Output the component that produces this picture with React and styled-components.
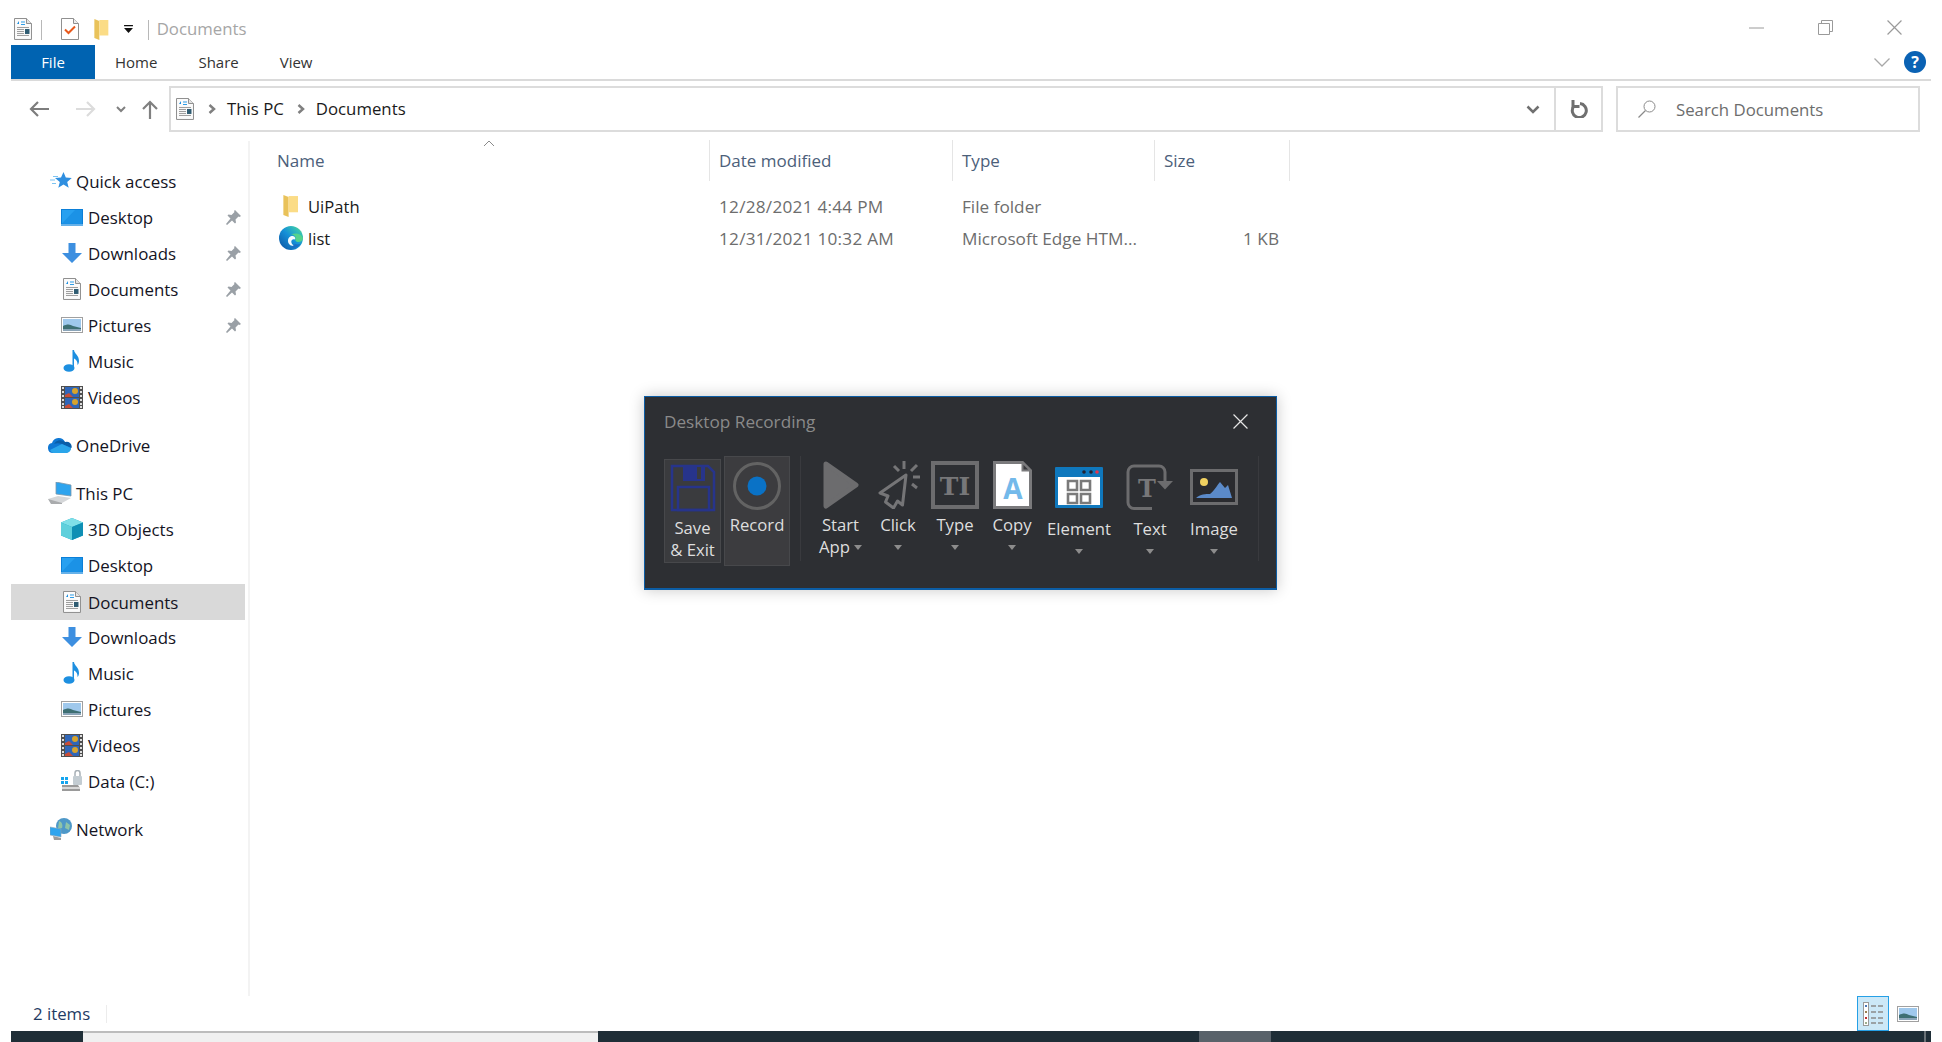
import React from 'react'
import styled, { createGlobalStyle } from 'styled-components'

const GlobalStyle = createGlobalStyle`
  html, body {
    margin: 0;
    padding: 0;
    background: #ffffff;
    font-family: 'Open Sans', 'Noto Sans', sans-serif;
    overflow: hidden;
  }
`

const Page = styled.div`
  position: relative;
  width: 1942px;
  height: 1042px;
  padding: 0 11px;
  box-sizing: border-box;
  display: flex;
  flex-direction: column;
  color: #1a1a1a;
  font-size: 16px;
  overflow: hidden;
`

const TitleBar = styled.div`
  height: 45px;
  display: flex;
  align-items: flex-end;
  flex: none;
`
const QuickTools = styled.div`
  display: flex;
  align-items: center;
  height: 30px;
  padding: 0 0 0 3px;
  margin-bottom: 1px;
`
const TitleSep = styled.div`
  width: 1px;
  height: 20px;
  background: #b8b8b8;
  margin: 2px ${(p) => p.$right || 0}px 0 ${(p) => p.$left || 0}px;
`
const QatSlot = styled.div`
  display: flex;
  margin-right: ${(p) => p.$right || 0}px;
`
const TitleText = styled.div`
  color: #a6a6a6;
  font-size: 16.8px;
  padding-bottom: 2px;
`
const WindowButtons = styled.div`
  margin-left: auto;
  display: flex;
  align-items: center;
  height: 45px;
  gap: 54px;
  padding-right: 29px;
  padding-top: 10px;
  box-sizing: border-box;
`

const RibbonTabs = styled.div`
  height: 34px;
  display: flex;
  align-items: center;
  flex: none;
  border-bottom: 2px solid #dadada;
`
const FileTab = styled.div`
  width: 84px;
  height: 34px;
  background: #0063b1;
  color: #ffffff;
  display: flex;
  align-items: center;
  justify-content: center;
  font-size: 15px;
  margin-right: 20px;
`
const Tab = styled.div`
  font-size: 15px;
  color: #333;
  margin-right: ${(p) => p.$right}px;
`
const RibbonRight = styled.div`
  margin-left: auto;
  display: flex;
  align-items: center;
  gap: 14px;
  padding-right: 5px;
`
const HelpBadge = styled.div`
  width: 22px;
  height: 22px;
  border-radius: 50%;
  background: #0a62b4;
  color: #ffffff;
  font-weight: 700;
  font-size: 16px;
  display: flex;
  align-items: center;
  justify-content: center;
`

const AddressRow = styled.div`
  height: 46px;
  margin-top: 5px;
  display: flex;
  flex: none;
`
const NavButtons = styled.div`
  width: 158px;
  display: flex;
  align-items: center;
  padding-left: 18px;
  box-sizing: border-box;
`
const NavSlot = styled.div`
  display: flex;
  margin-right: ${(p) => p.$right}px;
`
const AddressBar = styled.div`
  width: 1387px;
  display: flex;
  align-items: center;
  border: 2px solid #dcdcdc;
  box-sizing: border-box;
  padding-left: 5px;
`
const PathStart = styled.span`
  display: flex;
  margin-left: 14px;
`
const Crumb = styled.span`
  font-size: 16.8px;
  margin: 0 13px 0 11px;
  padding-bottom: 2px;
  color: #1a1a1a;
`
const AddressEnd = styled.div`
  margin-left: auto;
  margin-right: 14px;
  display: flex;
`
const RefreshBox = styled.div`
  width: 47px;
  display: flex;
  align-items: center;
  justify-content: center;
  border: 2px solid #dcdcdc;
  border-left: none;
  box-sizing: border-box;
`
const SearchBox = styled.div`
  width: 304px;
  margin-left: 13px;
  display: flex;
  align-items: center;
  gap: 20px;
  border: 2px solid #dcdcdc;
  box-sizing: border-box;
  padding-left: 20px;
  font-size: 16.8px;
  color: #6d6d6d;
`

const Main = styled.div`
  flex: 1;
  display: flex;
  min-height: 0;
`
const Sidebar = styled.nav`
  width: 234px;
  padding-top: 31px;
  flex: none;
`
const Splitter = styled.div`
  width: 2px;
  margin: 9px 0 0 3px;
  background: #f3f3f3;
  flex: none;
`
const NavGroup = styled.div`
  margin-bottom: 12px;
`
const NavRow = styled.div`
  height: 36px;
  display: flex;
  align-items: center;
  padding-left: ${(p) => (p.$child ? 48 : 35)}px;
  background: ${(p) => (p.$selected ? '#d9d9d9' : 'transparent')};
`
const NavIcon = styled.span`
  width: ${(p) => (p.$child ? 29 : 30)}px;
  padding-right: 4px;
  box-sizing: border-box;
  display: flex;
  justify-content: ${(p) => (p.$child ? 'center' : 'flex-end')};
  flex: none;
`
const NavLabel = styled.span`
  font-size: 16.9px;
  color: #14141f;
`
const SelectedRowFill = styled(NavRow)`
  margin-top: 1px;
  margin-bottom: -1px;
`
const PinSlot = styled.span`
  margin-left: auto;
  margin-right: 4px;
  display: flex;
`

const Content = styled.div`
  flex: 1;
  padding: 8px 0 0 18px;
  min-width: 0;
`
const Columns = styled.div`
  display: grid;
  grid-template-columns: 442px 243px 202px 135px;
  width: 1022px;
`
const HeaderRow = styled(Columns)`
  height: 41px;
  margin-bottom: 9px;
`
const HeaderCell = styled.div`
  display: flex;
  align-items: center;
  padding-left: 9px;
  position: relative;
  font-size: 17px;
  color: #4c607a;
  border-right: 1px solid #e5e5e5;
`
const SortMark = styled.span`
  position: absolute;
  top: 0;
  left: 215px;
  display: flex;
`
const FileRow = styled(Columns)`
  height: 32px;
  align-items: center;
  font-size: 17.2px;
`
const NameCell = styled.div`
  display: flex;
  align-items: center;
  gap: 4px;
  padding-left: 9px;
  font-size: 16.6px;
  color: #1a1a1a;
`
const FileIcon = styled.span`
  width: 27px;
  display: flex;
  justify-content: center;
`
const InfoCell = styled.div`
  padding-left: 9px;
  color: #6d6d6d;
  white-space: nowrap;
`
const DateCell = styled(InfoCell)`
  font-size: 17.2px;
  letter-spacing: 0.25px;
`
const SizeCell = styled(InfoCell)`
  text-align: right;
  padding-right: 11px;
`

const StatusBar = styled.div`
  height: 35px;
  flex: none;
  display: flex;
  align-items: center;
  padding-left: 22px;
  font-size: 16.8px;
  color: #1f3b63;
`
const StatusSep = styled.div`
  width: 1px;
  height: 18px;
  background: #ececec;
  margin-left: 16px;
`
const ViewSwitch = styled.div`
  margin-left: auto;
  height: 35px;
  display: flex;
  align-items: center;
  gap: 8px;
  padding-right: 12px;
`
const DetailsButton = styled.div`
  width: 32px;
  height: 35px;
  box-sizing: border-box;
  background: #cce8f7;
  border: 1px solid #26a0e6;
  display: flex;
  align-items: center;
  justify-content: center;
`

const Taskbar = styled.div`
  height: 11px;
  flex: none;
  display: flex;
  background: #1f2e37;
  overflow: hidden;
`
const TaskSegment = styled.div`
  width: ${(p) => p.$width}px;
  margin-left: ${(p) => p.$left}px;
  box-sizing: border-box;
  background: ${(p) => p.$bg};
  border-top: ${(p) => (p.$framed ? '2px solid #bcbcbc' : 'none')};
`
const TaskClock = styled.div`
  width: 72px;
  margin-left: 494px;
  padding-top: 6px;
  font-size: 15px;
  line-height: 20px;
  color: #ffffff;
  white-space: nowrap;
`

/* the recorder panel floats over the explorer window */
const Recorder = styled.div`
  position: absolute;
  left: 644px;
  top: 396px;
  width: 633px;
  height: 194px;
  box-sizing: border-box;
  background: #2d2f33;
  border: 1px solid #0c5da5;
  border-bottom-width: 2px;
  box-shadow: 0 0 14px rgba(0, 0, 0, 0.22);
`
const RecorderHead = styled.div`
  height: 48px;
  display: flex;
  align-items: center;
  justify-content: space-between;
  padding: 0 28px 0 19px;
  font-size: 17.2px;
  color: #8a8a8a;
`
const RecorderTools = styled.div`
  margin-top: 11px;
  display: flex;
  align-items: flex-start;
  padding-left: 19px;
`
const SaveBox = styled.div`
  width: 57px;
  height: 104px;
  margin-top: 3px;
  box-sizing: border-box;
  padding-top: 4px;
  background: #3a3b3e;
  border: 1px solid #47484b;
  display: flex;
  flex-direction: column;
  align-items: center;
`
const RecordBox = styled.div`
  width: 66px;
  height: 110px;
  margin-left: 3px;
  box-sizing: border-box;
  background: #3c3c3f;
  border: 1px solid #47484b;
  display: flex;
  flex-direction: column;
  align-items: center;
`
const ToolSep = styled.div`
  width: 1px;
  height: 105px;
  background: #393a3e;
  margin-left: ${(p) => p.$left}px;
`
const Tool = styled.div`
  width: ${(p) => p.$width}px;
  margin-left: ${(p) => p.$left}px;
  display: flex;
  flex-direction: column;
  align-items: center;
`
const IconSlot = styled.div`
  height: ${(p) => p.$height}px;
  display: flex;
  align-items: center;
  justify-content: center;
  flex: none;
`
const ToolLabel = styled.div`
  font-size: 16.7px;
  line-height: 22px;
  color: #dedede;
  text-align: center;
  white-space: nowrap;
  margin-top: ${(p) => p.$top || 0}px;
`
const Caret = styled.span`
  display: ${(p) => (p.$inline ? 'inline-block' : 'block')};
  width: 0;
  height: 0;
  border-left: 4.5px solid transparent;
  border-right: 4.5px solid transparent;
  border-top: 5px solid #8c8c8c;
  margin: ${(p) => (p.$inline ? '0 0 3px 4px' : '9px 0 0')};
`

const DocIcon = ({ size = 18 }) => (
  <svg width={size} height={size * 1.22} viewBox="0 0 18 22">
    <path d="M.5.5h12l5 5v16H.5z" fill="#fbfbfb" stroke="#8f8f8f" />
    <path d="M12.5.5v5h5" fill="#e4e4e4" stroke="#8f8f8f" />
    <path d="M3 6l2-3v3z" fill="#1c8fe0" />
    <path d="M7 4h4M7 6.500h4" stroke="#2a9be6" />
    <path d="M3 9.500h12M3 11.500h7M3 13.500h7M3 15.500h7M3 17.500h12" stroke="#9c9c9c" />
    <rect x="11" y="11" width="4.500" height="5" fill="#2f5c72" />
  </svg>
)
const CheckDoc = () => (
  <svg width="18" height="22" viewBox="0 0 18 22">
    <path d="M.5.5h12l5 5v16H.5z" fill="#fff" stroke="#909090" />
    <path d="M12.500.5v5h5" fill="#eee" stroke="#909090" />
    <path d="M4 11.500l3.500 3.500L14 8.500" fill="none" stroke="#e8591c" strokeWidth="2" />
  </svg>
)
const FolderSliver = ({ height = 21 }) => (
  <svg width={height * 0.7} height={height} viewBox="0 0 14 21">
    <path d="M0 0l5 2v19l-5-2z" fill="#e9c25a" />
    <path d="M5 1h9v15.500H5z" fill="#fbdc86" />
  </svg>
)
const QatCaret = () => (
  <svg width="9" height="8" viewBox="0 0 10 9">
    <path d="M0 0h10v1.500H0zM0 3.500h10L5 9z" fill="#111" />
  </svg>
)
const Star = () => (
  <svg width="22" height="20" viewBox="0 0 22 20">
    <path d="M13.500 1l2.300 5.600 6 .4-4.600 3.900 1.500 5.900-5.200-3.200-5.200 3.200 1.500-5.900L5 7l6-.4z" fill="#2f8fe0" />
    <path d="M3 5.500h5M0 9h5M2 12.500h4" stroke="#7cc4f2" strokeWidth="1.200" />
  </svg>
)
const Desktop = () => (
  <svg width="22" height="17" viewBox="0 0 22 17">
    <rect width="22" height="17" fill="#0b7fd8" />
    <rect x="1" y="1" width="20" height="13.500" fill="#27a0f0" />
    <path d="M1 14.500L14 1h7v13.500z" fill="#1b92e6" />
    <rect x="0" y="15.500" width="22" height="1" fill="#bfe3fa" />
  </svg>
)
const Download = () => (
  <svg width="20" height="20" viewBox="0 0 20 20">
    <path d="M6.500 0h7v10H20l-10 10L0 10h6.500z" fill="#3d8fe0" />
  </svg>
)
const Pictures = () => (
  <svg width="22" height="16" viewBox="0 0 22 16">
    <rect x=".5" y=".5" width="21" height="15" fill="#fff" stroke="#a0a0a0" />
    <rect x="2" y="2" width="18" height="12" fill="#9fc8ec" />
    <path d="M2 9c4-2 7-2 10 0l8 2v3H2z" fill="#3e6f73" />
    <path d="M2 12h18v2H2z" fill="#8aa4b8" />
  </svg>
)
const Note = () => (
  <svg width="18" height="22" viewBox="0 0 18 22">
    <ellipse cx="6" cy="18" rx="5.500" ry="3.800" fill="#1d8fe0" />
    <path d="M9.500 18V0h1.500c.5 4 5 5 5 11 0 1.500-.5 3-1.500 4 .3-4-2-6-3.500-6.500V18z" fill="#1d8fe0" />
  </svg>
)
const Film = () => (
  <svg width="22" height="23" viewBox="0 0 22 23">
    <rect width="22" height="23" fill="#4f4f4f" />
    <path d="M1 2h2M1 6h2M1 10h2M1 14h2M1 18h2M1 21h2M19 2h2M19 6h2M19 10h2M19 14h2M19 18h2M19 21h2" stroke="#ddd" strokeWidth="2" />
    <rect x="4" y="1" width="14" height="10" fill="#2f66b8" />
    <rect x="4" y="12" width="14" height="10" fill="#2f66b8" />
    <circle cx="14" cy="5" r="3" fill="#d7a32c" />
    <circle cx="14" cy="16" r="3" fill="#d7a32c" />
    <path d="M4 9l4-2 4 4H4zM4 20l4-2 4 4H4z" fill="#c94c36" />
  </svg>
)
const Cloud = () => (
  <svg width="25" height="16" viewBox="0 0 25 16">
    <path d="M6 16a5 5 0 0 1-1-9.900A7 7 0 0 1 18 5a5.500 5.500 0 0 1 1 11z" fill="#0f78d4" />
    <path d="M7 7a7 7 0 0 1 11-2 5 5 0 0 1 6.500 6L15 7c-3-1-6-1-8 0z" fill="#0a5ea8" />
    <path d="M6 16h13a5.500 5.500 0 0 0 5-5L15 7 3 13a5 5 0 0 0 3 3z" fill="#2aa5ea" />
  </svg>
)
const Computer = () => (
  <svg width="24" height="22" viewBox="0 0 24 22">
    <path d="M8 0l15 3v11L8 12z" fill="#2ea4ee" stroke="#7f98aa" strokeWidth=".8" />
    <path d="M0 17l10-3 13 2-9 5H4z" fill="#d5d7d9" />
    <path d="M0 17l14 4v1H3z" fill="#a9abad" />
  </svg>
)
const Cube = () => (
  <svg width="22" height="22" viewBox="0 0 22 22">
    <path d="M11 0l11 4.500v13L11 22 0 17.500v-13z" fill="#1aa5c4" />
    <path d="M11 0l11 4.500L11 9 0 4.500z" fill="#7fe0e8" />
    <path d="M0 4.500L11 9v13L0 17.500z" fill="#5fd0dc" />
    <path d="M11 9l11-4.500v13L11 22z" fill="#0f8fb4" />
  </svg>
)
const Drive = () => (
  <svg width="24" height="22" viewBox="0 0 24 22">
    <path d="M1 7h3v3H1zM5 7h3v3H5zM1 11h3v3H1zM5 11h3v3H5z" fill="#14a5ef" />
    <path d="M2 15h16l2 3v3H2z" fill="#9a9a9a" />
    <path d="M2 17h18v2H2z" fill="#d8d8d8" />
    <rect x="13" y="6" width="9" height="9" rx="1" fill="#c3ccd2" />
    <path d="M15 6V3a2.500 2.500 0 0 1 5 0v3" fill="none" stroke="#a8b0b6" strokeWidth="1.500" />
  </svg>
)
const Network = () => (
  <svg width="22" height="22" viewBox="0 0 22 22">
    <circle cx="14" cy="8" r="8" fill="#4e98c8" />
    <path d="M9 3c3 1 4 4 3 7l-4 1zM16 4l4 3-1 5-4-2z" fill="#8ec4a8" />
    <path d="M0 9l11 2v8L0 17z" fill="#2ea4ee" stroke="#8fa6b6" strokeWidth=".6" />
    <path d="M3 18l8 2v2H4z" fill="#9b9b9b" />
  </svg>
)
const Pin = () => (
  <svg width="15" height="15" viewBox="0 0 15 15">
    <path d="M9 0l6 6-1.500 1-1-.5-3 3 .5 3-1 1-3-3L1 15l-1-1 4.500-5.500-3-3 1-1 3 .5 3-3-.5-1z" fill="#9aa0a6" />
  </svg>
)
const Edge = () => (
  <svg width="24" height="24" viewBox="0 0 24 24">
    <defs>
      <linearGradient id="edgeBody" x1="0" y1="1" x2="1" y2="0">
        <stop offset="0" stopColor="#0b4f9e" />
        <stop offset="0.5" stopColor="#1590d8" />
        <stop offset="0.8" stopColor="#35c1b5" />
        <stop offset="1" stopColor="#7adf6a" />
      </linearGradient>
    </defs>
    <circle cx="12" cy="12" r="12" fill="url(#edgeBody)" />
    <path d="M24 12.500c-.5 2.500-3 4-5.500 3.500-2-.4-2.500-2-2-3.500.5-2-1.500-4-4.500-4 4-2 11-1 12 4z" fill="#54d38c" />
    <path d="M9 15c0-3.500 3-5.500 5.500-4.700 1.800.6 2 2 1.500 3.200-2-.7-3.700.2-3.700 2.300 0 2 1.400 3.300 3.200 4-3.200.8-6.500-1.500-6.500-4.800z" fill="#f4fbff" />
    <path d="M12 21.500c3.500 1.200 7.500-.5 10-4-1.500 1-4 1.200-6 .6z" fill="#1b6fc4" />
  </svg>
)

const Floppy = () => (
  <svg width="46" height="48" viewBox="0 0 46 48">
    <path d="M2 2h36l6 6v38H2z" fill="none" stroke="#27348b" strokeWidth="2.500" />
    <rect x="13" y="2" width="22" height="15" fill="#27348b" />
    <rect x="27" y="3" width="4" height="12" fill="#3a3b3e" />
    <rect x="8" y="23" width="31" height="23" fill="none" stroke="#27348b" strokeWidth="2.500" />
  </svg>
)
const RecordMark = () => (
  <svg width="48" height="48" viewBox="0 0 48 48">
    <circle cx="24" cy="24" r="22.500" fill="none" stroke="#636363" strokeWidth="3" />
    <circle cx="24" cy="24" r="9.500" fill="#0a72c6" />
  </svg>
)
const Play = () => (
  <svg width="36" height="48" viewBox="0 0 36 48">
    <path d="M3 3l30 21L3 45z" fill="#6c6c6e" stroke="#6c6c6e" strokeWidth="5" strokeLinejoin="round" />
  </svg>
)
const ClickMark = () => (
  <svg width="44" height="48" viewBox="0 0 44 48">
    <path d="M30 14L4 32l8 3-2.500 6 8 6 4-7 5 4z" fill="none" stroke="#757577" strokeWidth="3" strokeLinejoin="round" />
    <path d="M28 0v8M18 5l5 5M41 4l-6 6M44 16h-7M41 27l-5-4" stroke="#757577" strokeWidth="3" />
  </svg>
)
const GlyphText = styled.text`
  font-family: 'DejaVu Serif', serif;
  font-weight: 700;
  fill: #777779;
`
const TypeMark = () => (
  <svg width="48" height="48" viewBox="0 0 48 48">
    <rect x="2" y="2" width="44" height="44" fill="none" stroke="#6c6c6e" strokeWidth="4" />
    <GlyphText x="24" y="34" fontSize="25" textAnchor="middle">TI</GlyphText>
  </svg>
)
const CopyLetter = styled.text`
  font-family: 'Open Sans', sans-serif;
  font-weight: 700;
  fill: #73b9ea;
`
const CopyMark = () => (
  <svg width="39" height="48" viewBox="0 0 39 48">
    <path d="M1.500 1.500h28l8 8v37h-36z" fill="#fff" stroke="#7a7a7c" strokeWidth="3" />
    <path d="M29.500 1.500v8h8z" fill="#3a3b3e" stroke="#7a7a7c" strokeWidth="2" />
    <CopyLetter x="20" y="38" fontSize="28" textAnchor="middle">A</CopyLetter>
  </svg>
)
const ElementMark = () => (
  <svg width="48" height="41" viewBox="0 0 48 41">
    <rect width="48" height="41" rx="1" fill="#0f78bd" />
    <rect x="3" y="10" width="42" height="28" fill="#fff" />
    <circle cx="29" cy="5" r="1.800" fill="#223" />
    <circle cx="36" cy="5" r="1.800" fill="#223" />
    <circle cx="42" cy="5" r="1.800" fill="#e8344a" />
    <path d="M13 14h9v9h-9zM26 14h9v9h-9zM13 27h9v9h-9zM26 27h9v9h-9z" fill="none" stroke="#7a7a7a" strokeWidth="2.600" />
  </svg>
)
const TextMark = () => (
  <svg width="48" height="46" viewBox="0 0 48 46">
    <path d="M26 44.500H8a6 6 0 0 1-6-6V8a6 6 0 0 1 6-6h25a6 6 0 0 1 6 6v13" fill="none" stroke="#6c6c6e" strokeWidth="3" />
    <path d="M31 17h16l-8 8.500z" fill="#6c6c6e" />
    <GlyphText x="21" y="33" fontSize="24" textAnchor="middle">T</GlyphText>
  </svg>
)
const ImageMark = () => (
  <svg width="48" height="36" viewBox="0 0 48 36">
    <rect x="1.500" y="1.500" width="45" height="33" fill="#2a2b2f" stroke="#6c6c6e" strokeWidth="3" />
    <circle cx="14" cy="13" r="4" fill="#f0d060" />
    <path d="M6 29c4-4 10-4 14-4 4-3 8-10 10-12l5 6 3-3 4 13z" fill="#5b8ac9" />
  </svg>
)
const Close = ({ size = 14, color = '#e6e6e6' }) => (
  <svg width={size} height={size} viewBox="0 0 14 14">
    <path d="M.5.5l13 13M13.500.5l-13 13" stroke={color} strokeWidth="1.100" />
  </svg>
)
const Chevron = ({ width = 8, height = 10, color = '#808080', weight = 2.5 }) => (
  <svg width={width} height={height} viewBox="0 0 8 10">
    <path d="M1.500 1L6 5 1.500 9" fill="none" stroke={color} strokeWidth={weight} />
  </svg>
)
const Arrow = ({ color, flip }) => (
  <svg width="20" height="16" viewBox="0 0 20 16" style={flip ? { transform: 'scaleX(-1)' } : undefined}>
    <path d="M20 8H2M9 1L2 8l7 7" fill="none" stroke={color} strokeWidth="2.200" />
  </svg>
)

const quickAccess = [
  ['Desktop', Desktop, true],
  ['Downloads', Download, true],
  ['Documents', DocIcon, true],
  ['Pictures', Pictures, true],
  ['Music', Note],
  ['Videos', Film],
]
const thisPc = [
  ['3D Objects', Cube],
  ['Desktop', Desktop],
  ['Documents', DocIcon, false, true],
  ['Downloads', Download],
  ['Music', Note],
  ['Pictures', Pictures],
  ['Videos', Film],
  ['Data (C:)', Drive],
]

const SideItem = ({ label, Icon, pinned, selected }) => {
  const Row = selected ? SelectedRowFill : NavRow
  return (
    <Row $child $selected={selected}>
      <NavIcon $child>
        <Icon />
      </NavIcon>
      <NavLabel>{label}</NavLabel>
      {pinned && (
        <PinSlot>
          <Pin />
        </PinSlot>
      )}
    </Row>
  )
}
const SideRoot = ({ label, Icon }) => (
  <NavRow>
    <NavIcon>
      <Icon />
    </NavIcon>
    <NavLabel>{label}</NavLabel>
  </NavRow>
)

const App = () => (
  <Page>
    <GlobalStyle />
    <TitleBar>
      <QuickTools>
        <QatSlot $right={9}>
          <DocIcon />
        </QatSlot>
        <TitleSep $right={19} />
        <QatSlot $right={15}>
          <CheckDoc />
        </QatSlot>
        <QatSlot $right={15}>
          <FolderSliver />
        </QatSlot>
        <QatSlot $right={15}>
          <QatCaret />
        </QatSlot>
        <TitleSep $right={8} />
        <TitleText>Documents</TitleText>
      </QuickTools>
      <WindowButtons>
        <svg width="15" height="2" viewBox="0 0 15 2">
          <path d="M0 1h15" stroke="#9a9a9a" />
        </svg>
        <svg width="15" height="15" viewBox="0 0 15 15">
          <path d="M.5 3.500h11v11H.5zM3.500 3.500v-3h11v11h-3" fill="none" stroke="#9a9a9a" />
        </svg>
        <Close size={15} color="#9a9a9a" />
      </WindowButtons>
    </TitleBar>
    <RibbonTabs>
      <FileTab>File</FileTab>
      <Tab $right={41}>Home</Tab>
      <Tab $right={41}>Share</Tab>
      <Tab $right={0}>View</Tab>
      <RibbonRight>
        <svg width="16" height="9" viewBox="0 0 16 9">
          <path d="M.5.5L8 8 15.500.5" fill="none" stroke="#a8a8a8" strokeWidth="1.300" />
        </svg>
        <HelpBadge>?</HelpBadge>
      </RibbonRight>
    </RibbonTabs>
    <AddressRow>
      <NavButtons>
        <NavSlot $right={27}>
          <Arrow color="#7d7d7d" />
        </NavSlot>
        <NavSlot $right={20}>
          <Arrow color="#dcdcdc" flip />
        </NavSlot>
        <NavSlot $right={16}>
          <svg width="10" height="7" viewBox="0 0 10 7">
            <path d="M1 1l4 4 4-4" fill="none" stroke="#808080" strokeWidth="2" />
          </svg>
        </NavSlot>
        <svg width="16" height="19" viewBox="0 0 16 19">
          <path d="M8 19V2M1 9l7-7 7 7" fill="none" stroke="#808080" strokeWidth="2.200" />
        </svg>
      </NavButtons>
      <AddressBar>
        <DocIcon />
        <PathStart>
          <Chevron />
        </PathStart>
        <Crumb>This PC</Crumb>
        <Chevron />
        <Crumb>Documents</Crumb>
        <AddressEnd>
          <svg width="14" height="9" viewBox="0 0 14 9">
            <path d="M1.500 1.500L7 7l5.500-5.500" fill="none" stroke="#707070" strokeWidth="2.500" />
          </svg>
        </AddressEnd>
      </AddressBar>
      <RefreshBox>
        <svg width="18" height="18" viewBox="0 0 18 18">
          <path d="M10 3.600A7 7 0 1 1 3.600 6.500" fill="none" stroke="#707070" strokeWidth="3" />
          <path d="M3 0v6.500h6.500" fill="none" stroke="#707070" strokeWidth="3" />
        </svg>
      </RefreshBox>
      <SearchBox>
        <svg width="18" height="18" viewBox="0 0 18 18">
          <circle cx="11.500" cy="6.500" r="5.500" fill="none" stroke="#8a8a8a" />
          <path d="M7.500 10.500L.5 17.500" stroke="#8a8a8a" strokeWidth="1.300" />
        </svg>
        Search Documents
      </SearchBox>
    </AddressRow>
    <Main>
      <Sidebar>
        <NavGroup>
          <SideRoot label="Quick access" Icon={Star} />
          {quickAccess.map(([label, Icon, pinned]) => (
            <SideItem key={label} label={label} Icon={Icon} pinned={pinned} />
          ))}
        </NavGroup>
        <NavGroup>
          <SideRoot label="OneDrive" Icon={Cloud} />
        </NavGroup>
        <NavGroup>
          <SideRoot label="This PC" Icon={Computer} />
          {thisPc.map(([label, Icon, pinned, selected]) => (
            <SideItem key={label} label={label} Icon={Icon} pinned={pinned} selected={selected} />
          ))}
        </NavGroup>
        <SideRoot label="Network" Icon={Network} />
      </Sidebar>
      <Splitter />
      <Content>
        <HeaderRow>
          <HeaderCell>
            Name
            <SortMark>
              <svg width="12" height="7" viewBox="0 0 12 7">
                <path d="M1 6l5-5 5 5" fill="none" stroke="#8a8a8a" />
              </svg>
            </SortMark>
          </HeaderCell>
          <HeaderCell>Date modified</HeaderCell>
          <HeaderCell>Type</HeaderCell>
          <HeaderCell>Size</HeaderCell>
        </HeaderRow>
        <FileRow>
          <NameCell>
            <FileIcon>
              <FolderSliver height={22} />
            </FileIcon>
            UiPath
          </NameCell>
          <DateCell>12/28/2021 4:44 PM</DateCell>
          <InfoCell>File folder</InfoCell>
          <SizeCell />
        </FileRow>
        <FileRow>
          <NameCell>
            <FileIcon>
              <Edge />
            </FileIcon>
            list
          </NameCell>
          <DateCell>12/31/2021 10:32 AM</DateCell>
          <InfoCell>Microsoft Edge HTM...</InfoCell>
          <SizeCell>1 KB</SizeCell>
        </FileRow>
      </Content>
    </Main>
    <StatusBar>
      2 items
      <StatusSep />
      <ViewSwitch>
        <DetailsButton>
          <svg width="20" height="24" viewBox="0 0 20 24">
            <rect x=".5" y=".5" width="5" height="23" fill="#fff" stroke="#9a9a9a" />
            <path d="M2 3h2v2H2z" fill="#4a78b8" />
            <path d="M2 9h2v2H2z" fill="#9a8050" />
            <path d="M2 15h2v2H2z" fill="#c03030" />
            <path d="M2 20h2v2H2z" fill="#9fb090" />
            <path d="M8 4h5M15 4h5M8 10h5M15 10h5M8 16h5M15 16h5M8 21h5M15 21h5" stroke="#8a8a8a" strokeWidth="1.500" />
          </svg>
        </DetailsButton>
        <Pictures />
      </ViewSwitch>
    </StatusBar>
    <Taskbar>
      <TaskSegment $left={72} $width={515} $bg="#f0f0f0" $framed />
      <TaskSegment $left={601} $width={72} $bg="#59626a" />
      <TaskClock>11:45 AM</TaskClock>
      <TaskSegment $left={87} $width={2} $bg="#6a7277" />
    </Taskbar>
    <Recorder>
      <RecorderHead>
        Desktop Recording
        <Close size={15} />
      </RecorderHead>
      <RecorderTools>
        <SaveBox>
          <Floppy />
          <ToolLabel $top={5}>
            Save
            <br />
            &amp; Exit
          </ToolLabel>
        </SaveBox>
        <RecordBox>
          <IconSlot $height={57}>
            <RecordMark />
          </IconSlot>
          <ToolLabel>Record</ToolLabel>
        </RecordBox>
        <ToolSep $left={10} />
        <Tool $width={51} $left={14}>
          <IconSlot $height={58}>
            <Play />
          </IconSlot>
          <ToolLabel>
            Start
            <br />
            App
            <Caret $inline />
          </ToolLabel>
        </Tool>
        <Tool $width={50} $left={7}>
          <IconSlot $height={58}>
            <ClickMark />
          </IconSlot>
          <ToolLabel>Click</ToolLabel>
          <Caret />
        </Tool>
        <Tool $width={48} $left={8}>
          <IconSlot $height={58}>
            <TypeMark />
          </IconSlot>
          <ToolLabel>Type</ToolLabel>
          <Caret />
        </Tool>
        <Tool $width={44} $left={11}>
          <IconSlot $height={58}>
            <CopyMark />
          </IconSlot>
          <ToolLabel>Copy</ToolLabel>
          <Caret />
        </Tool>
        <Tool $width={58} $left={16}>
          <IconSlot $height={62}>
            <ElementMark />
          </IconSlot>
          <ToolLabel>Element</ToolLabel>
          <Caret />
        </Tool>
        <Tool $width={48} $left={18}>
          <IconSlot $height={62}>
            <TextMark />
          </IconSlot>
          <ToolLabel>Text</ToolLabel>
          <Caret />
        </Tool>
        <Tool $width={56} $left={12}>
          <IconSlot $height={62}>
            <ImageMark />
          </IconSlot>
          <ToolLabel>Image</ToolLabel>
          <Caret />
        </Tool>
        <ToolSep $left={16} />
      </RecorderTools>
    </Recorder>
  </Page>
)

export default App
